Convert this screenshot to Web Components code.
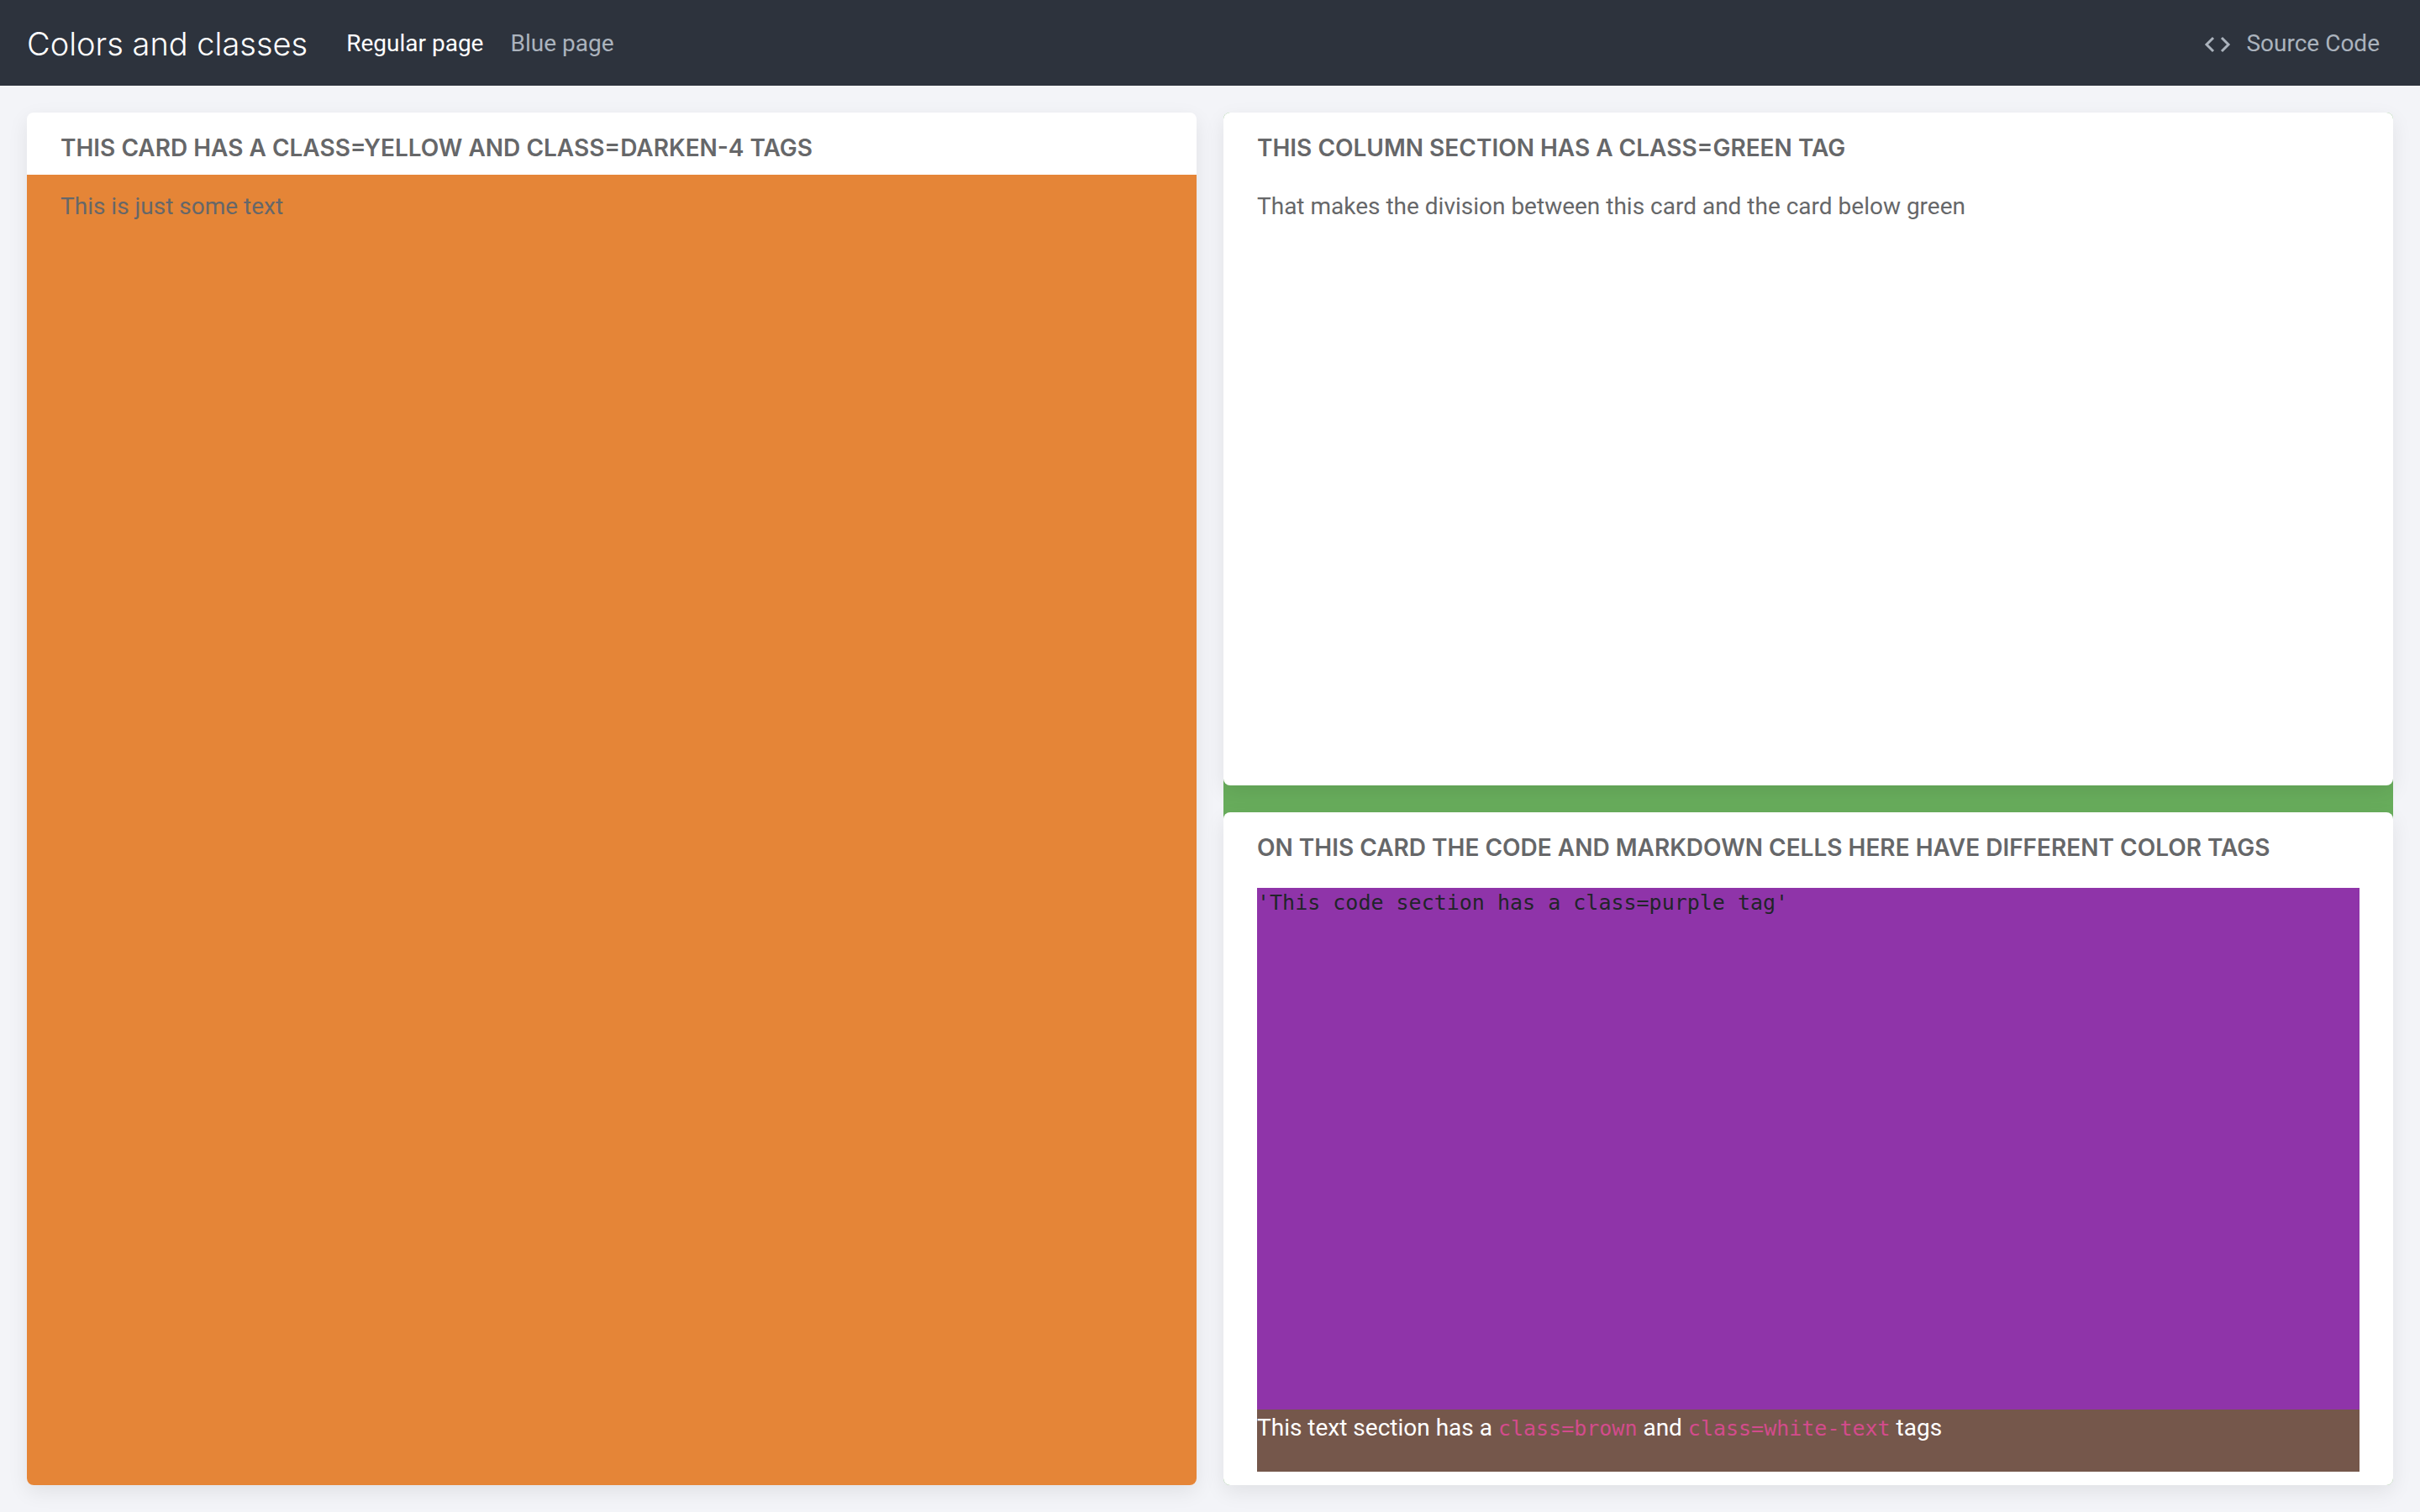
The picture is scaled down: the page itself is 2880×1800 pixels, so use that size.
<!DOCTYPE html>
<html lang="en">
<head>
<meta charset="utf-8">
<title>Colors and classes</title>
<style>
  html, body { height: 100%; }
  body {
    margin: 0;
    background: #f3f4f8;
    color: #666769;
    font-family: Roboto, Inter, sans-serif;
    font-size: 28px;
    line-height: 44px;
  }
</style>
</head>
<body>
<dash-app>
  <dash-navbar slot="nav" brand="Colors and classes">
    <dash-link active>Regular page</dash-link>
    <dash-link>Blue page</dash-link>
    <dash-link slot="end" icon>Source Code</dash-link>
  </dash-navbar>
  <dash-column>
    <dash-card heading="This card has a class=yellow and class=darken-4 tags" color="#e58537">
      <dash-text>This is just some text</dash-text>
    </dash-card>
  </dash-column>
  <dash-column color="#68ad5c">
    <dash-card heading="This column section has a class=green tag">
      <dash-text>That makes the division between this card and the card below green</dash-text>
    </dash-card>
    <dash-card heading="On this card the code and markdown cells here have different color tags">
      <dash-output>'This code section has a class=purple tag'</dash-output>
      <dash-markdown>This text section has a <dash-code>class=brown</dash-code> and <dash-code>class=white-text</dash-code> tags</dash-markdown>
    </dash-card>
  </dash-column>
</dash-app>
<script>
const define = (name, html, setup) => customElements.define(name, class extends HTMLElement {
  connectedCallback() {
    if (this.shadowRoot) return;
    this.attachShadow({ mode: 'open' }).innerHTML = html;
    if (setup) setup(this, this.shadowRoot);
  }
});

define('dash-app', `
  <style>
    :host { display: flex; flex-direction: column; height: 100vh; }
    main { flex: 1; min-height: 0; display: grid; grid-template-columns: 1fr 1fr; gap: 32px; padding: 32px; }
  </style>
  <slot name="nav"></slot>
  <main><slot></slot></main>`);

define('dash-navbar', `
  <style>
    :host { display: block; background: #2d333d; color: #fff; }
    nav { box-sizing: border-box; display: flex; align-items: center; height: 102px; padding: 2px 32px 0; gap: 32px; }
    .brand { font-family: Inter, sans-serif; font-size: 38px; line-height: 56px; font-weight: 300; margin-right: 14px; color: #fff; text-decoration: none; }
    .end { margin-left: auto; padding-right: 16px; }
  </style>
  <nav>
    <a class="brand" href="#"></a>
    <slot></slot>
    <div class="end"><slot name="end"></slot></div>
  </nav>`, (el, root) => { root.querySelector('.brand').textContent = el.getAttribute('brand'); });

define('dash-link', `
  <style>
    :host { display: block; color: #abb3bd; }
    :host([active]) { color: #fff; }
    a { display: flex; align-items: center; gap: 18px; color: inherit; text-decoration: none; }
    svg { display: none; width: 32px; height: 20px; margin-top: 2px; }
    :host([icon]) svg { display: block; }
  </style>
  <a href="#">
    <svg viewBox="0 0 32 20" fill="none" stroke="currentColor" stroke-width="3" aria-hidden="true"><path d="M11 2 3 10l8 8M21 2l8 8-8 8"/></svg>
    <span><slot></slot></span>
  </a>`);

define('dash-column', `
  <style>
    :host { display: flex; flex-direction: column; gap: 32px; min-width: 0; border-radius: 8px; }
  </style>
  <slot></slot>`, el => { el.style.background = el.getAttribute('color') || ''; });

define('dash-card', `
  <style>
    :host { display: flex; flex: 1 1 0; flex-direction: column; min-height: 0; overflow: hidden;
      background: #fff; border-radius: 8px; box-shadow: 0 8px 24px rgba(0, 0, 0, .08); }
    h2 { margin: 0; padding: 20px 40px 10px; font-family: Inter, sans-serif; font-size: 28px; line-height: 44px; font-weight: 600; text-transform: uppercase; white-space: nowrap; }
    .body { flex: 1; display: flex; flex-direction: column; padding: 16px 40px; }
  </style>
  <h2></h2>
  <div class="body"><slot></slot></div>`, (el, root) => {
    root.querySelector('h2').textContent = el.getAttribute('heading');
    root.querySelector('.body').style.background = el.getAttribute('color') || '';
  });

define('dash-text', `
  <style>:host { display: block; } p { margin: 0; }</style>
  <p><slot></slot></p>`);

define('dash-output', `
  <style>
    :host { display: block; flex: 1; background: #8f34a9; color: #212529; }
    pre { margin: 0; font: 25px/36px "DejaVu Sans Mono", monospace; }
  </style>
  <pre><slot></slot></pre>`);

define('dash-markdown', `
  <style>
    :host { display: block; background: #75574b; color: #fff; }
    p { margin: 0; padding-bottom: 30px; }
  </style>
  <p><slot></slot></p>`);

define('dash-code', `
  <style>
    :host { display: inline; }
    code { font-family: "DejaVu Sans Mono", monospace; font-size: 25px; line-height: 1; color: #d34b8c; }
  </style>
  <code><slot></slot></code>`);
</script>
</body>
</html>
